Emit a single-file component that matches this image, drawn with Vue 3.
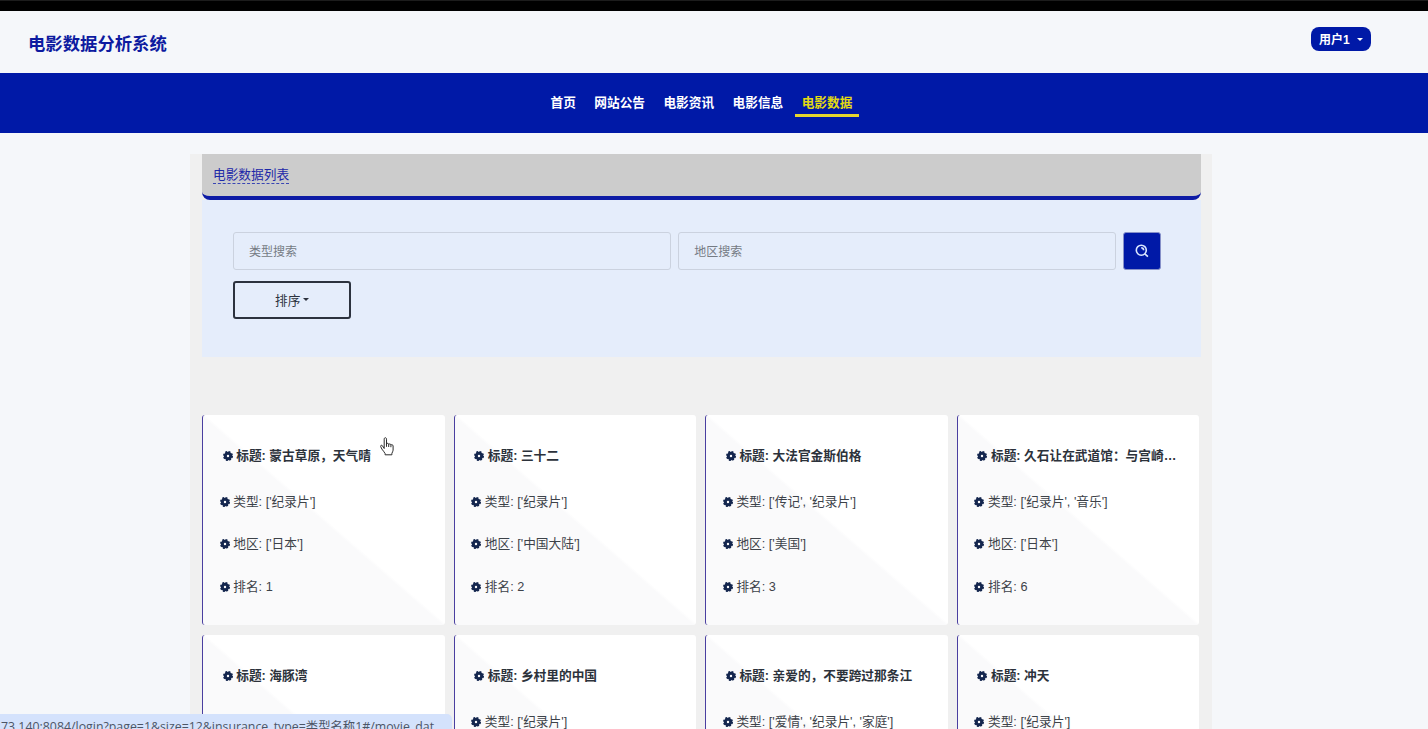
<template>
  <div class="page">
    <div class="top-strip"></div>
    <header class="header">
      <div class="logo">电影数据分析系统</div>
      <button class="user-btn">用户1<span class="caret"></span></button>
    </header>

    <nav class="nav">
      <a
        v-for="item in menus"
        :key="item"
        :class="['nav-item', { active: item === current }]"
        @click="current = item"
      >{{ item }}</a>
    </nav>

    <main class="container">
      <div class="list-title"><a>电影数据列表</a></div>

      <div class="search-panel">
        <div class="search-row">
          <input v-model="typeKey" class="search-input" placeholder="类型搜索" />
          <input v-model="areaKey" class="search-input" placeholder="地区搜索" />
          <button class="search-btn">
            <svg viewBox="0 0 14 14" width="14" height="14">
              <circle cx="6.3" cy="6.2" r="5" />
              <path d="M6.2 3.8a2.5 2.5 0 0 1 2.4 2.4M9.9 9.8l3 2.9" />
            </svg>
          </button>
        </div>
        <button class="sort-btn">排序<span class="caret"></span></button>
      </div>

      <div class="cards">
        <div v-for="movie in movies" :key="movie.title" class="card">
          <div class="card-title">
            <svg class="gear" viewBox="0 0 10 10"><circle class="teeth" cx="5" cy="5" r="4.2" /><circle class="ring" cx="5" cy="5" r="2.7" /></svg>
            标题: {{ movie.title }}
          </div>
          <div v-for="field in fields" :key="field.key" class="card-line">
            <svg class="gear" viewBox="0 0 10 10"><circle class="teeth" cx="5" cy="5" r="4.2" /><circle class="ring" cx="5" cy="5" r="2.7" /></svg>
            {{ field.label }}: {{ movie[field.key] }}
          </div>
        </div>
      </div>
    </main>

    <div class="status-bar">73.140:8084/login?page=1&amp;size=12&amp;insurance_type=类型名称1#/movie_dat</div>
    <svg class="cursor" viewBox="0 0 14 19" width="14" height="19">
      <path d="M4.2 11.5V2.2c0-2 2.3-2 2.3 0v5c.2-1.3 2.2-1.2 2.2.3.3-1 2.2-.8 2.2.6.5-.8 2.2-.5 2.2.9v4.2c0 1.2-.9 2-1.2 3.1v1.5H5.1v-1.3c-.8-1.7-2.2-2.8-3.2-4.4L.7 9.6c-.5-1.2.9-1.9 1.8-.8z" />
      <path d="M6.5 7v2.8M8.7 7.5V10M10.9 8.2v2" />
    </svg>
  </div>
</template>

<script setup>
import { ref } from 'vue'

const menus = ['首页', '网站公告', '电影资讯', '电影信息', '电影数据']
const current = ref('电影数据')
const typeKey = ref('')
const areaKey = ref('')

const fields = [
  { key: 'type', label: '类型' },
  { key: 'area', label: '地区' },
  { key: 'rank', label: '排名' }
]

const movies = ref([
  { title: '蒙古草原，天气晴', type: "['纪录片']", area: "['日本']", rank: 1 },
  { title: '三十二', type: "['纪录片']", area: "['中国大陆']", rank: 2 },
  { title: '大法官金斯伯格', type: "['传记', '纪录片']", area: "['美国']", rank: 3 },
  { title: '久石让在武道馆：与宫崎骏动画一同走过的25年', type: "['纪录片', '音乐']", area: "['日本']", rank: 6 },
  { title: '海豚湾', type: "['纪录片']", area: "['美国']", rank: 7 },
  { title: '乡村里的中国', type: "['纪录片']", area: "['中国大陆']", rank: 8 },
  { title: '亲爱的，不要跨过那条江', type: "['爱情', '纪录片', '家庭']", area: "['韩国']", rank: 9 },
  { title: '冲天', type: "['纪录片']", area: "['中国台湾']", rank: 10 }
])
</script>

<style>
body {
  margin: 0;
  overflow: hidden;
}
</style>

<style scoped>
.page {
  position: relative;
  height: 729px;
  overflow: hidden;
  background: #f5f7fa;
  font-family: 'Liberation Sans', 'Noto Sans CJK SC', sans-serif;
  font-size: 12.7px;
  color: #3d4249;
}

.page * {
  box-sizing: border-box;
}

button,
input {
  font-family: inherit;
}

.top-strip {
  height: 11px;
  background: #000;
  border-top: 1px solid #1c1c1c;
}

.header {
  display: flex;
  justify-content: space-between;
  align-items: flex-start;
  height: 62px;
  padding: 16px 57px 0 28px;
}

.logo {
  font-size: 17.35px;
  font-weight: bold;
  line-height: 34px;
  color: #0d1ba0;
}

.user-btn {
  display: flex;
  align-items: center;
  justify-content: space-between;
  width: 60px;
  height: 24px;
  padding: 0 8px 2px;
  border: none;
  border-radius: 8px;
  background: #0019a7;
  color: #fff;
  font-size: 12px;
  font-weight: bold;
}

.caret {
  display: inline-block;
  border-top: 3px solid currentColor;
  border-left: 3px solid transparent;
  border-right: 3px solid transparent;
}

.user-btn .caret {
  margin-top: 3px;
}

.nav {
  display: flex;
  justify-content: center;
  height: 60px;
  padding: 14px 25px 0 0;
  gap: 5px;
  background: #0019a7;
}

.nav-item {
  height: 30px;
  padding: 1px 6.7px 0;
  line-height: 30px;
  font-weight: bold;
  color: #fff;
  cursor: pointer;
}

.nav-item.active {
  border-bottom: 3px solid #e6d62e;
  color: #e2d912;
}

.container {
  width: 1022px;
  margin: 21px 0 0 190px;
  padding: 0 11.5px 0 12px;
  background: #f0f0f0;
}

.list-title {
  height: 46px;
  padding: 14px 11px 0;
  border-bottom: 4px solid #0d1ba5;
  border-radius: 0 0 8px 8px;
  background: #ccc;
}

.list-title a {
  display: inline-block;
  border-bottom: 1px dashed #3a46b4;
  line-height: 15px;
  color: #1c28a8;
}

.search-panel {
  height: 157px;
  padding: 32px 39px 0 31px;
  background: #e5edfb;
}

.search-row {
  display: flex;
  gap: 7.6px;
}

.search-input {
  width: 437.6px;
  height: 38px;
  padding: 2px 15px 0;
  border: 1px solid #cbd2df;
  border-radius: 3px;
  background: transparent;
  font-size: 12px;
  outline: none;
}

.search-input::placeholder {
  color: #757b84;
}

.search-btn {
  display: flex;
  align-items: center;
  justify-content: center;
  width: 37.6px;
  height: 38px;
  padding: 0;
  border: 1px solid #8791c9;
  border-radius: 3px;
  background: #0019a7;
}

.search-btn svg {
  fill: none;
  stroke: #dce8ff;
  stroke-width: 1.6;
}

.sort-btn {
  display: flex;
  align-items: center;
  justify-content: center;
  gap: 3px;
  width: 118.4px;
  height: 38px;
  padding: 0 6px 2px;
  margin-top: 11px;
  border: 2px solid #2c323e;
  border-radius: 3px;
  background: transparent;
  font-size: 12.7px;
  color: #2c323e;
}

.cards {
  display: grid;
  grid-template-columns: repeat(4, 242.6px);
  column-gap: 9px;
  row-gap: 10px;
  padding-top: 58px;
}

.card {
  height: 210px;
  padding: 32px 17px 0 16.7px;
  border-left: 1px solid #4a3fa0;
  border-radius: 3px;
  background: linear-gradient(to top right, #fafafb 49.5%, #fff 50.5%);
}

.card-title {
  padding: 0 3px;
  margin-bottom: 26.6px;
  line-height: 19px;
  font-weight: bold;
  color: #2c323b;
  overflow: hidden;
  white-space: nowrap;
  text-overflow: ellipsis;
}

.card-line {
  height: 19px;
  margin-bottom: 23.5px;
  line-height: 18px;
  white-space: nowrap;
}

.gear {
  width: 10px;
  height: 10px;
  vertical-align: -1px;
  fill: none;
}

.teeth {
  stroke: #14264e;
  stroke-width: 1.6;
  stroke-dasharray: 1.9 1.4;
}

.ring {
  stroke: #14264e;
  stroke-width: 3;
}

.status-bar {
  position: absolute;
  left: 0;
  bottom: 0;
  width: 452px;
  height: 15px;
  padding-left: 1px;
  overflow: hidden;
  border-top-right-radius: 5px;
  background: #d4e2fc;
  font-family: 'Open Sans', 'Noto Sans CJK SC', sans-serif;
  font-size: 12.35px;
  line-height: 25px;
  white-space: nowrap;
  color: #4c5566;
}

.cursor {
  position: absolute;
  left: 380px;
  top: 437px;
  fill: #fff;
  stroke: #2b2b2b;
  stroke-width: 1;
}
</style>
